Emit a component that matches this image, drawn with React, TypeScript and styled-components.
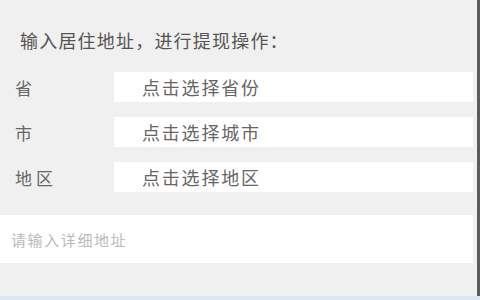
import React from "react";
import styled, { createGlobalStyle } from "styled-components";

const GlobalStyle = createGlobalStyle`
    html, body {
        margin: 0;
        padding: 0;
        background: #f0f0f0;
    }
    * {
        box-sizing: border-box;
    }
`;

const Frame = styled.div`
    width: 480px;
    height: 300px;
    border-bottom: 4px solid #d9e7f5;
    background: #f0f0f0;
    font-family: "Noto Sans CJK SC", "Noto Sans", sans-serif;
`;

const Panel = styled.div`
    height: 100%;
    padding-right: 4px;
    border-right: 3px solid #5c5c5c;
    display: flex;
    flex-direction: column;
`;

const Title = styled.div`
    padding: 27px 0 0 20px;
    height: 72px;
    font-size: 18px;
    line-height: 26px;
    letter-spacing: 1.2px;
    color: #555;
`;

const Rows = styled.div`
    display: flex;
    flex-direction: column;
    gap: 15px;
`;

const Row = styled.div`
    display: flex;
    align-items: center;
    height: 30px;
`;

const Label = styled.div`
    width: 114px;
    padding-left: 15px;
    font-size: 17px;
    letter-spacing: 4px;
    color: #666;
`;

const Picker = styled.div`
    flex: 1;
    height: 100%;
    background: #fff;
    display: flex;
    align-items: center;
    padding-left: 28px;
    font-size: 18px;
    letter-spacing: 1.8px;
    color: #666;
    cursor: pointer;
`;

const Detail = styled.input`
    margin-top: 23px;
    height: 48px;
    width: 100%;
    border: none;
    outline: none;
    background: #fff;
    padding: 0 0 0 11px;
    font-family: "Noto Sans CJK SC", "Noto Sans", sans-serif;
    font-size: 15px;
    letter-spacing: 1.6px;
    color: #555;
    &::placeholder {
        color: #bbb;
    }
`;

const fields = [
    { label: "省", hint: "点击选择省份" },
    { label: "市", hint: "点击选择城市" },
    { label: "地区", hint: "点击选择地区" },
];

const App: React.FC = () => {
    return (
        <>
            <GlobalStyle />
            <Frame>
                <Panel>
                    <Title>输入居住地址，进行提现操作：</Title>
                    <Rows>
                        {fields.map((f) => (
                            <Row key={f.label}>
                                <Label>{f.label}</Label>
                                <Picker>{f.hint}</Picker>
                            </Row>
                        ))}
                    </Rows>
                    <Detail placeholder="请输入详细地址" />
                </Panel>
            </Frame>
        </>
    );
};

export default App;
